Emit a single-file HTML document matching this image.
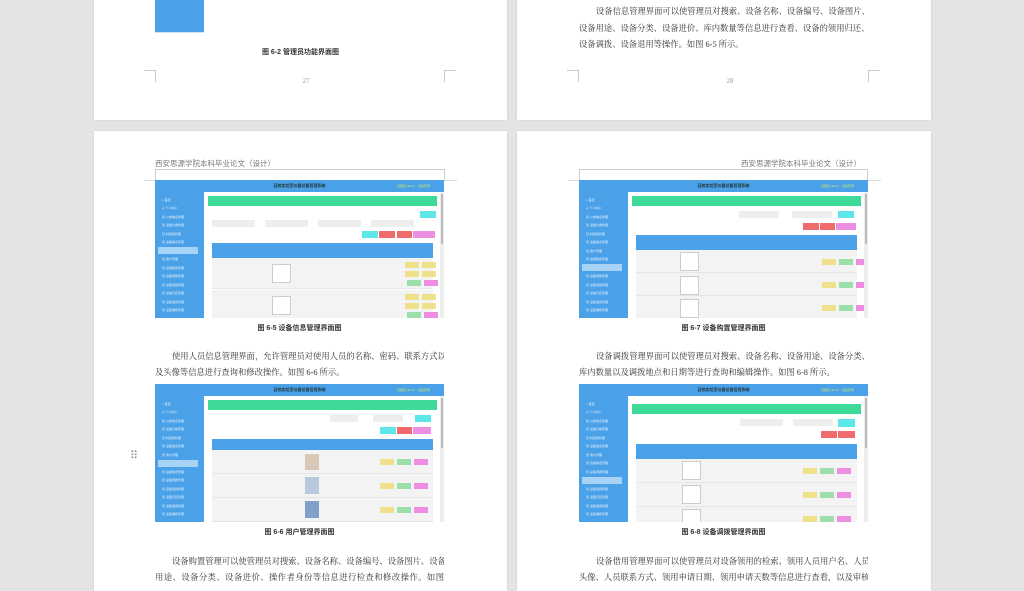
<!DOCTYPE html>
<html><head><meta charset="utf-8">
<style>
*{margin:0;padding:0;box-sizing:border-box}
body{width:1024px;height:575px;overflow:hidden;background:#e4e4e4;position:relative;font-family:"Liberation Serif","Noto Serif CJK SC","Noto Sans CJK SC",serif;color:#333}
.page{position:absolute;background:#fff;box-shadow:0 0 2px rgba(0,0,0,.12)}
.a{position:absolute}
.cor{position:absolute;width:12px;height:12px;border-color:#c8c8c8;border-style:solid;border-width:0}
.pn{position:absolute;font-size:7px;color:#999;width:40px;text-align:center}
.hdr{position:absolute;font-size:7.5px;color:#777;font-family:"Liberation Sans","Noto Sans CJK SC",sans-serif}
.cap{position:absolute;font-size:7px;color:#333;text-align:center;font-family:"Liberation Sans","Noto Sans CJK SC",sans-serif;font-weight:bold;width:289px}
.ln{position:absolute;font-size:8.3px;color:#333;width:289px;text-align:justify;text-align-last:justify;white-space:nowrap;overflow:hidden;height:12px;line-height:12px}
.ln.i{padding-left:17px}
.ln.last{text-align-last:left}
.ss{position:absolute;width:289px;height:138px;background:#f6f6f6;overflow:hidden;font-family:"Liberation Sans","Noto Sans CJK SC",sans-serif}
.ss .top{position:absolute;left:0;top:0;width:289px;height:12px;background:#4aa1e8}
.ss .tt{position:absolute;left:0;width:289px;top:3px;text-align:center;font-size:4px;color:#233;font-weight:bold}
.ss .usr{position:absolute;right:14px;top:4px;font-size:3px;color:#c9e86b}
.ss .side{position:absolute;left:0;top:12px;width:49px;height:126px;background:#4aa1e8}
.ss .mi{position:absolute;left:7px;font-size:3px;color:#e6f2ff;width:40px}
.ss .sel{position:absolute;left:3px;width:40px;height:7px;background:#a7d3f7}
.ss .cont{position:absolute;left:49px;top:12px;width:236px;height:126px;background:#fff}
.ss .grn{position:absolute;left:53px;top:16px;width:229px;height:10px;background:#3edb98}
.ss .scr{position:absolute;left:285px;top:12px;width:4px;height:126px;background:#eee}
.ss .scr i{position:absolute;left:1px;top:2px;width:2px;height:50px;background:#bbb}
.ss .th{position:absolute;left:57px;top:63px;width:221px;height:15px;background:#4aa1e8}
.ss .row{position:absolute;left:57px;width:221px;height:31px;background:#f3f3f3;border-bottom:1px solid #e6e6e6}
.ss .img{position:absolute;width:19px;height:19px;border:1px solid #ccc;background:#fff}
.b{position:absolute;width:14px;height:6px}
.y{background:#efe08a}.g{background:#9ddfaa}.p{background:#ee8ee2}.r{background:#ef6a6a}.c{background:#5fe6e8}
.inp{position:absolute;height:7px;width:43px;background:#eeeeee}
</style></head><body>

<!-- top-left page -->
<div class="page" style="left:94px;top:-10px;width:413px;height:130px">
 <div class="a" style="left:61px;top:10px;width:49px;height:33px;background:#4aa1e8"></div>
 <div class="a" style="left:61px;top:42px;width:49px;height:1px;background:#cfe4f5"></div>
 <div class="cap" style="left:62px;top:57px;">图 6-2 管理员功能界面图</div>
 <div class="cor" style="left:50px;top:80px;border-top-width:1px;border-right-width:1px"></div>
 <div class="cor" style="left:350px;top:80px;border-top-width:1px;border-left-width:1px"></div>
 <div class="pn" style="left:192px;top:87px">27</div>
</div>

<!-- top-right page -->
<div class="page" style="left:517px;top:-10px;width:414px;height:130px">
 <div class="ln i" style="left:62px;top:16px">设备信息管理界面可以使管理员对搜索、设备名称、设备编号、设备图片、</div>
 <div class="ln" style="left:62px;top:33px">设备用途、设备分类、设备进价、库内数量等信息进行查看、设备的领用归还、</div>
 <div class="ln last" style="left:62px;top:49px">设备调拨、设备退用等操作。如图 6-5 所示。</div>
 <div class="cor" style="left:50px;top:80px;border-top-width:1px;border-right-width:1px"></div>
 <div class="cor" style="left:351px;top:80px;border-top-width:1px;border-left-width:1px"></div>
 <div class="pn" style="left:193px;top:87px">28</div>
</div>

<!-- bottom-left page -->
<div class="page" style="left:94px;top:131px;width:413px;height:460px">
 <div class="hdr" style="left:61px;top:27px">西安思源学院本科毕业论文（设计）</div>
 <div class="a" style="left:61px;top:38px;width:290px;height:11px;border:1px solid #ccc;border-bottom:none"></div>
 <div class="a" style="left:50px;top:49px;width:313px;height:1px;background:#ddd"></div>
 <div class="cap" style="left:61px;top:192px">图 6-5 设备信息管理界面图</div>
 <div class="ln i" style="left:61px;top:220px">使用人员信息管理界面，允许管理员对使用人员的名称、密码、联系方式以</div>
 <div class="ln last" style="left:61px;top:236px">及头像等信息进行查询和修改操作。如图 6-6 所示。</div>
 <div class="cap" style="left:61px;top:396px">图 6-6 用户管理界面图</div>
 <div class="ln i" style="left:61px;top:425px">设备购置管理可以使管理员对搜索、设备名称、设备编号、设备图片、设备</div>
 <div class="ln" style="left:61px;top:441px">用途、设备分类、设备进价、操作者身份等信息进行检查和修改操作。如图</div>
</div>

<!-- bottom-right page -->
<div class="page" style="left:517px;top:131px;width:414px;height:460px">
 <div class="hdr" style="left:224px;top:27px">西安思源学院本科毕业论文（设计）</div>
 <div class="a" style="left:62px;top:38px;width:289px;height:11px;border:1px solid #ccc;border-bottom:none"></div>
 <div class="a" style="left:51px;top:49px;width:313px;height:1px;background:#ddd"></div>
 <div class="cap" style="left:62px;top:192px">图 6-7 设备购置管理界面图</div>
 <div class="ln i" style="left:62px;top:220px">设备调拨管理界面可以使管理员对搜索、设备名称、设备用途、设备分类、</div>
 <div class="ln last" style="left:62px;top:236px">库内数量以及调拨地点和日期等进行查询和编辑操作。如图 6-8 所示。</div>
 <div class="cap" style="left:62px;top:396px">图 6-8 设备调拨管理界面图</div>
 <div class="ln i" style="left:62px;top:425px">设备借用管理界面可以使管理员对设备领用的检索、领用人员用户名、人员</div>
 <div class="ln" style="left:62px;top:441px">头像、人员联系方式、领用申请日期、领用申请天数等信息进行查看，以及审核</div>
</div>

<div class="a" style="left:130px;top:449px;font-size:11px;color:#888;font-family:'DejaVu Sans',sans-serif">⠿</div>

<!-- screenshot 6-5 -->
<div class="ss" style="left:155px;top:180px">
 <div class="top"></div><div class="tt">高校实验室仪器设备管理系统</div><div class="usr">管理员 admin　退出登录</div>
 <div class="side"></div>
 <div class="mi" style="top:18px">⌂ 首页</div><div class="mi" style="top:26px">♙ 个人中心</div><div class="mi" style="top:35px">▦ 公告信息管理</div><div class="mi" style="top:43px">▦ 设备分类管理</div><div class="mi" style="top:52px">▦ 科室类管理</div><div class="mi" style="top:60px">▦ 设备信息管理</div>
 <div class="sel" style="top:67px"></div>
 <div class="mi" style="top:77px">▦ 用户管理</div><div class="mi" style="top:86px">▦ 设备购置管理</div><div class="mi" style="top:94px">▦ 设备调拨管理</div><div class="mi" style="top:103px">▦ 设备领用管理</div><div class="mi" style="top:111px">▦ 设备归还管理</div><div class="mi" style="top:120px">▦ 设备退用管理</div><div class="mi" style="top:128px">▦ 设备维修管理</div>
 <div class="cont"></div><div class="grn"></div>
 <div class="inp" style="left:57px;top:40px"></div><div class="inp" style="left:110px;top:40px"></div><div class="inp" style="left:163px;top:40px"></div><div class="inp" style="left:216px;top:40px"></div>
 <div class="b c" style="left:265px;top:31px;width:16px;height:7px"></div>
 <div class="b c" style="left:207px;top:51px;width:16px;height:7px"></div><div class="b r" style="left:224px;top:51px;width:16px;height:7px"></div><div class="b r" style="left:242px;top:51px;width:15px;height:7px"></div><div class="b p" style="left:258px;top:51px;width:22px;height:7px"></div>
 <div class="th"></div>
 <div class="row" style="top:78px"></div><div class="row" style="top:110px"></div>
 <div class="img" style="left:117px;top:84px"></div><div class="img" style="left:117px;top:116px"></div>
 <div class="b y" style="left:250px;top:82px"></div><div class="b y" style="left:267px;top:82px"></div><div class="b y" style="left:250px;top:91px"></div><div class="b y" style="left:267px;top:91px"></div><div class="b g" style="left:252px;top:100px"></div><div class="b p" style="left:269px;top:100px"></div>
 <div class="b y" style="left:250px;top:114px"></div><div class="b y" style="left:267px;top:114px"></div><div class="b y" style="left:250px;top:123px"></div><div class="b y" style="left:267px;top:123px"></div><div class="b g" style="left:252px;top:132px"></div><div class="b p" style="left:269px;top:132px"></div>
 <div class="scr"><i></i></div>
</div>

<!-- screenshot 6-6 -->
<div class="ss" style="left:155px;top:384px">
 <div class="top"></div><div class="tt">高校实验室仪器设备管理系统</div><div class="usr">管理员 admin　退出登录</div>
 <div class="side"></div>
 <div class="mi" style="top:18px">⌂ 首页</div><div class="mi" style="top:26px">♙ 个人中心</div><div class="mi" style="top:35px">▦ 公告信息管理</div><div class="mi" style="top:43px">▦ 设备分类管理</div><div class="mi" style="top:52px">▦ 科室类管理</div><div class="mi" style="top:60px">▦ 设备信息管理</div><div class="mi" style="top:69px">▦ 用户管理</div>
 <div class="sel" style="top:76px"></div>
 <div class="mi" style="top:86px">▦ 设备购置管理</div><div class="mi" style="top:94px">▦ 设备调拨管理</div><div class="mi" style="top:103px">▦ 设备领用管理</div><div class="mi" style="top:111px">▦ 设备归还管理</div><div class="mi" style="top:120px">▦ 设备退用管理</div><div class="mi" style="top:128px">▦ 设备维修管理</div>
 <div class="cont"></div><div class="grn"></div>
 <div class="inp" style="left:175px;top:31px;width:28px"></div><div class="inp" style="left:218px;top:31px;width:30px"></div>
 <div class="b c" style="left:260px;top:31px;width:16px;height:7px"></div>
 <div class="b c" style="left:225px;top:43px;width:16px;height:7px"></div><div class="b r" style="left:242px;top:43px;width:15px;height:7px"></div><div class="b p" style="left:258px;top:43px;width:18px;height:7px"></div>
 <div class="th" style="top:55px;height:11px"></div>
 <div class="row" style="top:66px;height:24px"></div><div class="row" style="top:90px;height:24px"></div><div class="row" style="top:114px;height:24px"></div>
 <div class="a" style="left:150px;top:70px;width:14px;height:16px;background:#d9c7b8"></div><div class="a" style="left:150px;top:93px;width:14px;height:17px;background:#b9c9dd"></div><div class="a" style="left:150px;top:117px;width:14px;height:17px;background:#7fa0c8"></div>
 <div class="b y" style="left:225px;top:75px"></div><div class="b g" style="left:242px;top:75px"></div><div class="b p" style="left:259px;top:75px"></div>
 <div class="b y" style="left:225px;top:99px"></div><div class="b g" style="left:242px;top:99px"></div><div class="b p" style="left:259px;top:99px"></div>
 <div class="b y" style="left:225px;top:123px"></div><div class="b g" style="left:242px;top:123px"></div><div class="b p" style="left:259px;top:123px"></div>
 <div class="scr"><i></i></div>
</div>

<!-- screenshot 6-7 -->
<div class="ss" style="left:579px;top:180px">
 <div class="top"></div><div class="tt">高校实验室仪器设备管理系统</div><div class="usr">管理员 admin　退出登录</div>
 <div class="side"></div>
 <div class="mi" style="top:18px">⌂ 首页</div><div class="mi" style="top:26px">♙ 个人中心</div><div class="mi" style="top:35px">▦ 公告信息管理</div><div class="mi" style="top:43px">▦ 设备分类管理</div><div class="mi" style="top:52px">▦ 科室类管理</div><div class="mi" style="top:60px">▦ 设备信息管理</div><div class="mi" style="top:69px">▦ 用户管理</div><div class="mi" style="top:77px">▦ 设备购置管理</div>
 <div class="sel" style="top:84px"></div>
 <div class="mi" style="top:94px">▦ 设备调拨管理</div><div class="mi" style="top:103px">▦ 设备领用管理</div><div class="mi" style="top:111px">▦ 设备归还管理</div><div class="mi" style="top:120px">▦ 设备退用管理</div><div class="mi" style="top:128px">▦ 设备维修管理</div>
 <div class="cont"></div><div class="grn"></div>
 <div class="inp" style="left:160px;top:31px;width:40px"></div><div class="inp" style="left:213px;top:31px;width:40px"></div>
 <div class="b c" style="left:259px;top:31px;width:16px;height:7px"></div>
 <div class="b r" style="left:224px;top:43px;width:16px;height:7px"></div><div class="b r" style="left:241px;top:43px;width:15px;height:7px"></div><div class="b p" style="left:257px;top:43px;width:20px;height:7px"></div>
 <div class="th" style="top:55px;height:15px"></div>
 <div class="row" style="top:70px;height:23px"></div><div class="row" style="top:93px;height:23px"></div><div class="row" style="top:116px;height:23px"></div>
 <div class="img" style="left:101px;top:72px"></div><div class="img" style="left:101px;top:96px"></div><div class="img" style="left:101px;top:119px"></div>
 <div class="b y" style="left:243px;top:79px"></div><div class="b g" style="left:260px;top:79px"></div><div class="b p" style="left:277px;top:79px;width:8px"></div>
 <div class="b y" style="left:243px;top:102px"></div><div class="b g" style="left:260px;top:102px"></div><div class="b p" style="left:277px;top:102px;width:8px"></div>
 <div class="b y" style="left:243px;top:125px"></div><div class="b g" style="left:260px;top:125px"></div><div class="b p" style="left:277px;top:125px;width:8px"></div>
 <div class="scr"><i></i></div>
</div>

<!-- screenshot 6-8 -->
<div class="ss" style="left:579px;top:384px">
 <div class="top"></div><div class="tt">高校实验室仪器设备管理系统</div><div class="usr">管理员 admin　退出登录</div>
 <div class="side"></div>
 <div class="mi" style="top:18px">⌂ 首页</div><div class="mi" style="top:26px">♙ 个人中心</div><div class="mi" style="top:35px">▦ 公告信息管理</div><div class="mi" style="top:43px">▦ 设备分类管理</div><div class="mi" style="top:52px">▦ 科室类管理</div><div class="mi" style="top:60px">▦ 设备信息管理</div><div class="mi" style="top:69px">▦ 用户管理</div><div class="mi" style="top:77px">▦ 设备购置管理</div><div class="mi" style="top:86px">▦ 设备调拨管理</div>
 <div class="sel" style="top:93px"></div>
 <div class="mi" style="top:103px">▦ 设备领用管理</div><div class="mi" style="top:111px">▦ 设备归还管理</div><div class="mi" style="top:120px">▦ 设备退用管理</div><div class="mi" style="top:128px">▦ 设备维修管理</div>
 <div class="cont"></div><div class="grn" style="top:20px"></div>
 <div class="inp" style="left:161px;top:35px;width:43px"></div><div class="inp" style="left:214px;top:35px;width:40px"></div>
 <div class="b c" style="left:259px;top:35px;width:17px;height:8px"></div>
 <div class="b r" style="left:242px;top:47px;width:16px;height:7px"></div><div class="b r" style="left:259px;top:47px;width:17px;height:7px"></div>
 <div class="th" style="top:60px;height:15px"></div>
 <div class="row" style="top:75px;height:24px"></div><div class="row" style="top:99px;height:24px"></div><div class="row" style="top:123px;height:24px"></div>
 <div class="img" style="left:103px;top:77px"></div><div class="img" style="left:103px;top:101px"></div><div class="img" style="left:103px;top:125px"></div>
 <div class="b y" style="left:224px;top:84px"></div><div class="b g" style="left:241px;top:84px"></div><div class="b p" style="left:258px;top:84px"></div>
 <div class="b y" style="left:224px;top:108px"></div><div class="b g" style="left:241px;top:108px"></div><div class="b p" style="left:258px;top:108px"></div>
 <div class="b y" style="left:224px;top:132px"></div><div class="b g" style="left:241px;top:132px"></div><div class="b p" style="left:258px;top:132px"></div>
 <div class="scr"><i></i></div>
</div>

</body></html>
